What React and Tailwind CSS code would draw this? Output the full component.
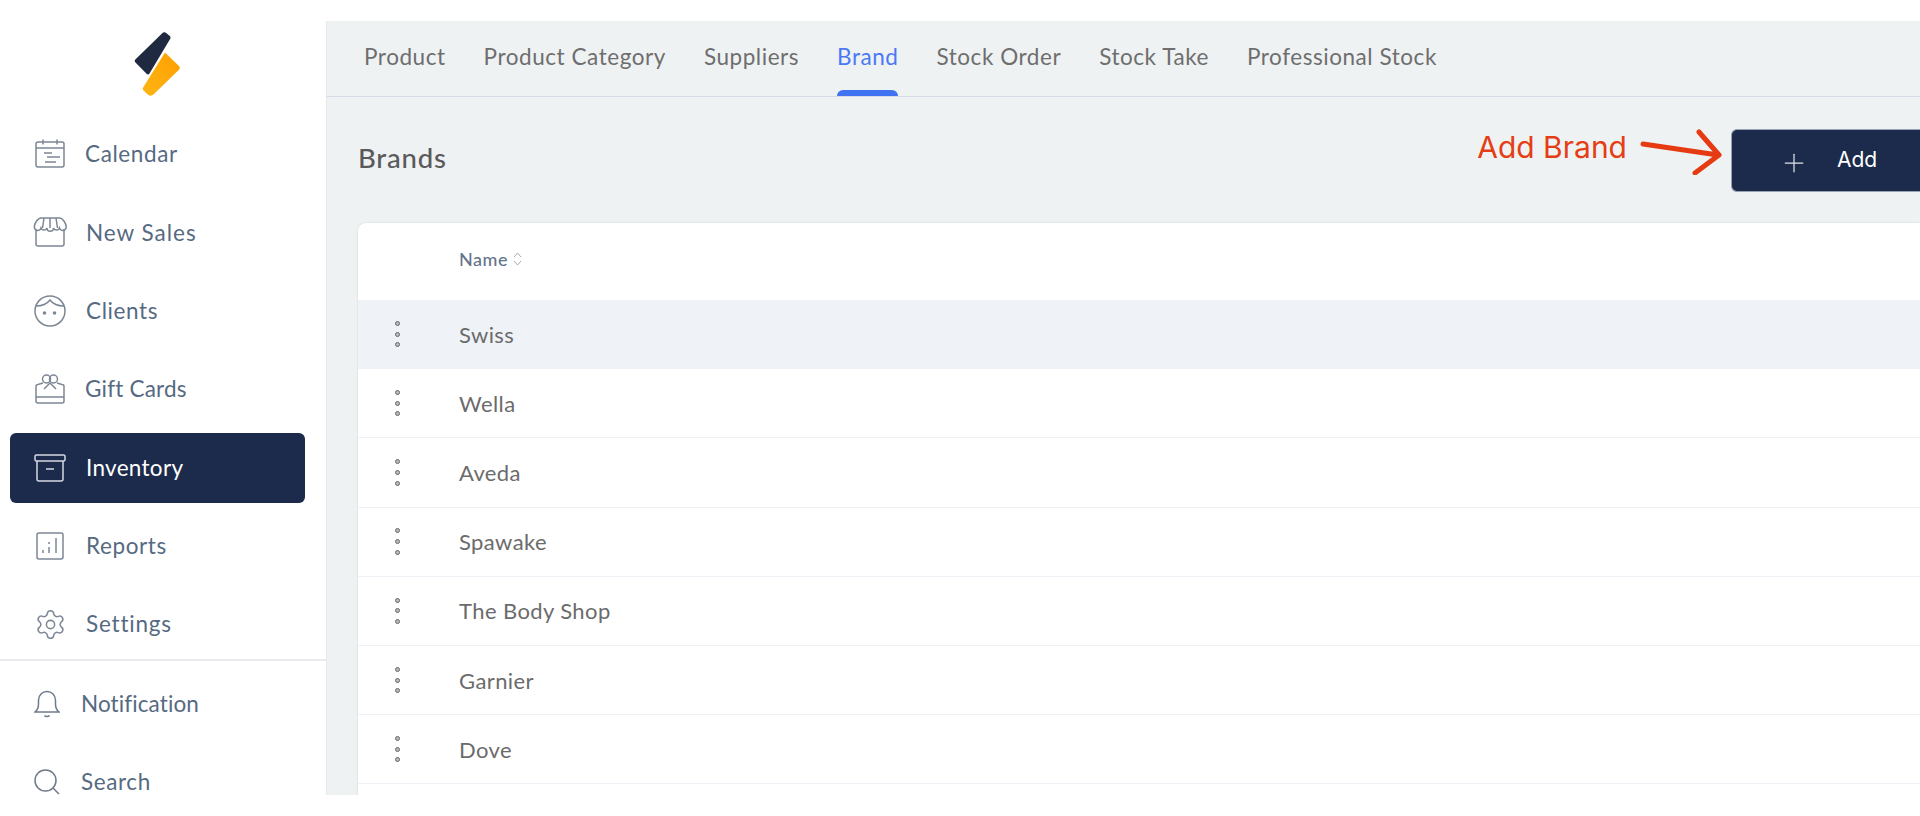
import { Plus, Settings } from 'lucide-react';

const navItems = [
  { name: 'Calendar', icon: CalendarIcon, gap: 'ml-[18px]', active: false },
  { name: 'New Sales', icon: StoreIcon, gap: 'ml-[19px] tracking-[1px]', active: false },
  { name: 'Clients', icon: ClientIcon, gap: 'ml-[19px]', active: false },
  { name: 'Gift Cards', icon: GiftIcon, gap: 'ml-[18px] tracking-[0.2px]', active: false },
  { name: 'Inventory', icon: BoxIcon, gap: 'ml-[19px] tracking-[0.3px]', active: true },
  { name: 'Reports', icon: ReportIcon, gap: 'ml-[19px]', active: false },
  { name: 'Settings', icon: GearIcon, gap: 'ml-[19px] tracking-[0.8px]', active: false },
];

const tabs = ['Product', 'Product Category', 'Suppliers', 'Brand', 'Stock Order', 'Stock Take', 'Professional Stock'];
const brands = ['Swiss', 'Wella', 'Aveda', 'Spawake', 'The Body Shop', 'Garnier', 'Dove'];

function CalendarIcon() {
  return (
    <svg width="30" height="30" viewBox="0 0 30 30" fill="none" stroke="currentColor" strokeWidth="1.5">
      <rect x="1" y="3" width="28" height="25" rx="2" />
      <path d="M1 9h28M8 0.5v5M22 0.5v5M9 14h8M12 18h13M10 23h11" />
    </svg>
  );
}

function StoreIcon() {
  return (
    <svg width="34" height="30" viewBox="0 0 34 30" fill="none" stroke="currentColor" strokeWidth="1.5">
      <path d="M3 12v15a2 2 0 0 0 2 2h24a2 2 0 0 0 2-2V12" />
      <path d="M7 1h20c3 0 6 6 6 8a3.200 3.200 0 0 1-6.500 2a3.200 3.200 0 0 1-6 0a3.200 3.200 0 0 1-6.500 0a3.200 3.200 0 0 1-6 0a3.200 3.200 0 0 1-6.500-2c0-2 3-8 6.500-8zM11 1l-1.500 10M17 1v10M23 1l1.500 10" />
    </svg>
  );
}

function ClientIcon() {
  return (
    <svg width="32" height="32" viewBox="0 0 32 32" fill="none" stroke="currentColor" strokeWidth="1.5">
      <circle cx="16" cy="16" r="15" />
      <path d="M2 11c6 0 11-2 14-6c3 4 8 6 14 6" />
      <circle cx="10.500" cy="18" r="1.800" fill="currentColor" stroke="none" />
      <circle cx="20.500" cy="18" r="1.800" fill="currentColor" stroke="none" />
    </svg>
  );
}

function GiftIcon() {
  return (
    <svg width="30" height="30" viewBox="0 0 30 30" fill="none" stroke="currentColor" strokeWidth="1.5">
      <path d="M8 9l-5 1.500a2 2 0 0 0-2 2V27a2 2 0 0 0 2 2h24a2 2 0 0 0 2-2V12.500a2 2 0 0 0-2-2L22 9M1 23h28" />
      <circle cx="11.500" cy="5" r="4" />
      <circle cx="18.500" cy="5" r="4" />
      <path d="M15 9l-6 6M15 9l6 6" />
    </svg>
  );
}

function BoxIcon() {
  return (
    <svg width="32" height="28" viewBox="0 0 32 28" fill="none" stroke="currentColor" strokeWidth="1.5">
      <rect x="1" y="1" width="30" height="6" rx="1.500" />
      <path d="M3 7v18a2 2 0 0 0 2 2h22a2 2 0 0 0 2-2V7M12 15h8" />
    </svg>
  );
}

function ReportIcon() {
  return (
    <svg width="28" height="28" viewBox="0 0 28 28" fill="none" stroke="currentColor" strokeWidth="1.5">
      <rect x="1" y="1" width="26" height="26" rx="2" />
      <path d="M7 21v-3M13 21v-6M13 10v2M20 21V6" />
    </svg>
  );
}

function GearIcon() {
  return <Settings size={33} strokeWidth={1.1} />;
}

function BellIcon() {
  return (
    <svg width="26" height="28" viewBox="0 0 26 28" fill="none" stroke="currentColor" strokeWidth="1.5">
      <path d="M1 22h24c-2.500-2-3.500-4-3.500-8V10a8.500 8.500 0 0 0-17 0v4c0 4-1 6-3.500 8z" />
      <path d="M10.500 25.500c1 1.300 4 1.300 5 0" />
    </svg>
  );
}

function SearchIcon() {
  return (
    <svg width="26" height="26" viewBox="0 0 26 26" fill="none" stroke="currentColor" strokeWidth="1.5">
      <circle cx="11.500" cy="11.500" r="10.500" />
      <path d="M19 19l6 6" />
    </svg>
  );
}

function Logo() {
  return (
    <svg width="46" height="64" viewBox="0 0 46 64">
      <defs>
        <linearGradient id="logoOrange" x1="0" y1="1" x2="1" y2="0">
          <stop offset="0" stopColor="#fdb515" />
          <stop offset="1" stopColor="#fe9f00" />
        </linearGradient>
      </defs>
      <path d="M28 1.500c1-1.300 3-1.500 4.200-.5l3.300 2.700c1.200 1 1.400 2.300.6 3.400L15.500 41.500c-.6 1-1.800 1.200-2.700.4L1.500 30.500c-1-1-1-2-.2-3z" fill="#1f2a40" />
      <path d="M31 20.500l14 13.500c1 1 1 2.500.2 3.500L19.500 62.500c-1.500 1.500-4 1.500-5.500.2l-4.500-4.200c-1-1-1-2.200-.4-3z" fill="url(#logoOrange)" />
    </svg>
  );
}

function NavRow({ item }) {
  const Icon = item.icon;
  return (
    <div className={`ml-[10px] mr-[21px] flex h-[70px] shrink-0 items-center rounded-md pl-[23px] text-[22.5px] tracking-[0.6px] ${item.active ? 'bg-[#1c2a4c] text-white' : 'text-[#566a82]'}`}>
      <span className={`flex w-[34px] shrink-0 justify-center ${item.active ? 'text-[#d5d9e2]' : 'text-[#7c8795]'}`}>
        <Icon />
      </span>
      <span className={item.gap}>{item.name}</span>
    </div>
  );
}

function DotsIcon() {
  return (
    <span className="flex flex-col gap-[5.7px]">
      <span className="h-[5px] w-[5px] rounded-full border border-[#666] bg-[#bbb]" />
      <span className="h-[5px] w-[5px] rounded-full border border-[#666] bg-[#bbb]" />
      <span className="h-[5px] w-[5px] rounded-full border border-[#666] bg-[#bbb]" />
    </span>
  );
}

export default function App() {
  return (
    <div className="h-[816px] w-[1920px] overflow-hidden bg-white font-['Lato','Noto_Sans',sans-serif]">
      <div className="flex h-[795px] overflow-hidden">
        {/* Sidebar */}
        <aside className="flex w-[326px] shrink-0 flex-col">
          <div className="flex h-[119px] shrink-0 justify-center pt-[32px] pr-[12px]">
            <Logo />
          </div>
          <nav className="flex flex-col gap-[8.4px]">
            {navItems.map((item) => (
              <NavRow key={item.name} item={item} />
            ))}
          </nav>
          <div className="border-t-2 border-[#e9ebef] pt-[4px] pl-[34px] text-[22.5px] tracking-[0.6px] text-[#566a82]">
            <div className="flex h-[78px] items-center">
              <span className="w-[47px] text-[#6f7b8b]"><BellIcon /></span>
              <span className="tracking-[0.1px]">Notification</span>
            </div>
            <div className="flex h-[78px] items-center">
              <span className="w-[47px] text-[#6f7b8b]"><SearchIcon /></span>
              <span>Search</span>
            </div>
          </div>
        </aside>

        {/* Main */}
        <main className="mt-[21px] min-w-0 flex-1 border-l border-[#e5e8ec] bg-[#eff2f3]">
          <div className="flex h-[76px] items-stretch gap-[38px] border-b border-[#d5dce6] pl-[37px] text-[22.5px] tracking-[0.55px] text-[#6e6e6e]">
            {tabs.map((tab) => (
              <div key={tab} className={`relative flex items-center pb-[4px] ${tab === 'Brand' ? 'text-[#4a78f5]' : ''}`}>
                {tab}
                {tab === 'Brand' && <span className="absolute right-0 bottom-0 left-0 h-[6px] rounded-t-md bg-[#3f73f2]" />}
              </div>
            ))}
          </div>

          <div className="flex h-[126px] items-center justify-between pl-[31px]">
            <h1 className="mb-[5px] text-[27.500px] font-medium tracking-[0.8px] text-[#5a5a5a]">Brands</h1>
            <div className="flex items-center">
              <span className="mb-[25px] font-['Inter',sans-serif] text-[30px] text-[#e53d14]">Add Brand</span>
              <svg className="mb-[17px] ml-[13px]" width="84" height="46" viewBox="0 0 84 46" fill="none" stroke="#e53a12" strokeWidth="5" strokeLinecap="round" strokeLinejoin="round">
                <path d="M3 15l75 11M59 3l20 23-24 18" />
              </svg>
              <button type="button" className="ml-[7px] flex h-[63px] w-[189px] items-center rounded-l-md border border-[#9aa3b4] border-r-0 bg-[#1c2a4c] pl-[47px] font-['Inter',sans-serif] text-[21px] text-white">
                <Plus size={30} strokeWidth={1} className="mt-[5px] text-[#dfe3ea]" />
                <span className="ml-[28px]">Add</span>
              </button>
            </div>
          </div>

          {/* Table */}
          <div className="ml-[31px] min-h-[600px] rounded-tl-lg bg-white shadow-[0_0_2px_rgba(0,0,0,0.15)]">
            <div className="flex h-[77px] items-center pb-[5px] pl-[101px] text-[18px] font-medium tracking-[0.5px] text-[#64748b]">
              Name
              <svg className="ml-[5px] text-[#a3abb7]" width="9" height="16" viewBox="0 0 9 16" fill="none" stroke="currentColor" strokeWidth="1">
                <path d="M1 6l3.500-4 3.500 4M1 10l3.500 4 3.500-4" />
              </svg>
            </div>
            {brands.map((brand, i) => (
              <div key={brand} className={`flex h-[69.2px] items-center border-b border-[#eef0f5] text-[22px] tracking-[0.4px] text-[#6b6b6b] ${i === 0 ? 'bg-[#eff3f8]' : ''}`}>
                <span className="flex w-[101px] justify-center pr-[23px]"><DotsIcon /></span>
                {brand}
              </div>
            ))}
          </div>
        </main>
      </div>
    </div>
  );
}
